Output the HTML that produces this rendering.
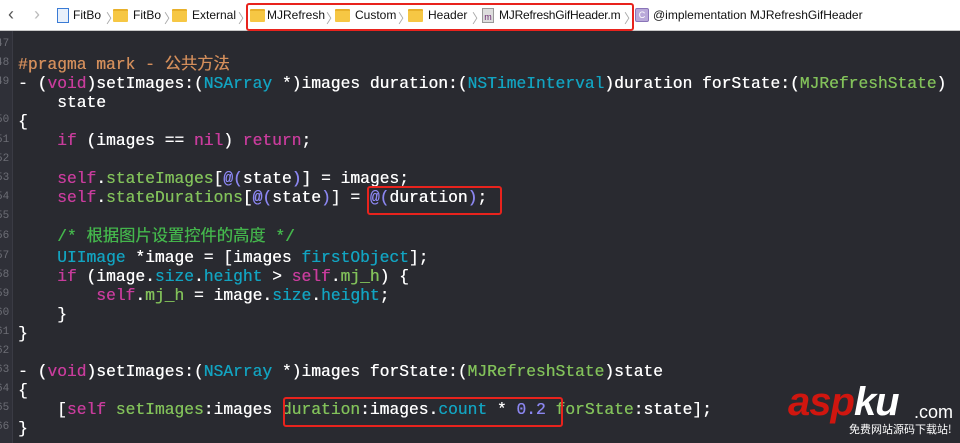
<!DOCTYPE html>
<html><head><meta charset="utf-8"><style>
body{margin:0;width:960px;height:443px;overflow:hidden;background:#292a30;position:relative;font-family:"Liberation Sans","Noto Sans CJK SC",sans-serif}
.top{position:absolute;left:0;top:0;width:960px;height:30px;background:#fff;border-bottom:1px solid #c8c8c8;font-size:12px;color:#111}
.top span{position:absolute;top:8px;white-space:nowrap}
.fold{position:absolute;top:9px;width:15px;height:11px;background:#f6c744;border-top:2px solid #e8b02a;border-radius:1px}
.sep{color:#aaa;font-size:13px}
.gut{position:absolute;left:0;top:31px;width:12px;height:412px;background:#2f3038;border-right:1px solid #3a3b44}
.ln{position:absolute;left:-4px;font:11px "Liberation Mono",monospace;color:#6c6d75}
.c{position:absolute;left:18px;white-space:pre;font:16.3px "Liberation Mono","Noto Sans CJK SC",monospace;color:#fff;line-height:19px;text-shadow:0.3px 0 0 currentColor}
.k{color:#c83c9c}.t{color:#12a3c0}.g{color:#82c15a}.n{color:#8b86f0}.p{color:#d38e5b}.m{color:#44b64c}
.box{position:absolute;border:2px solid #e8231d;border-radius:3px}
</style></head><body>
<div class="top">
<span style="left:8px;top:4px;font-size:18px;color:#555">‹</span>
<span style="left:34px;top:4px;font-size:18px;color:#bbb">›</span>
<div style="position:absolute;left:57px;top:8px;width:10px;height:13px;border:1px solid #3a7bd5;background:#e8f0fb"></div>
<span style="left:73px">FitBo</span><span class="sep" style="left:106px">〉</span>
<div class="fold" style="left:113px"></div><span style="left:133px">FitBo</span><span class="sep" style="left:164px">〉</span>
<div class="fold" style="left:172px"></div><span style="left:192px">External</span><span class="sep" style="left:238px">〉</span>
<div class="fold" style="left:250px"></div><span style="left:267px">MJRefresh</span><span class="sep" style="left:326px">〉</span>
<div class="fold" style="left:335px"></div><span style="left:355px">Custom</span><span class="sep" style="left:398px">〉</span>
<div class="fold" style="left:408px"></div><span style="left:428px">Header</span><span class="sep" style="left:472px">〉</span>
<div style="position:absolute;left:482px;top:8px;width:10px;height:13px;background:#ddd;border:1px solid #999;font-size:9px;color:#6a2a70;text-align:center;line-height:16px">m</div>
<span style="left:499px;letter-spacing:-0.2px">MJRefreshGifHeader.m</span><span class="sep" style="left:624px">〉</span>
<div style="position:absolute;left:635px;top:8px;width:12px;height:12px;background:#b9a9d9;border:1px solid #8a74b8;border-radius:2px;font-size:9px;color:#fff;text-align:center;line-height:12px">C</div>
<span style="left:653px">@implementation MJRefreshGifHeader</span>
<div class="box" style="left:246px;top:3px;width:384px;height:24px"></div>
</div>
<div class="gut">
<div class="ln" style="top:7px">47</div><div class="ln" style="top:26px">48</div><div class="ln" style="top:45px">49</div>
<div class="ln" style="top:83px">50</div><div class="ln" style="top:103px">51</div><div class="ln" style="top:122px">52</div>
<div class="ln" style="top:141px">53</div><div class="ln" style="top:160px">54</div><div class="ln" style="top:179px">55</div>
<div class="ln" style="top:199px">56</div><div class="ln" style="top:219px">57</div><div class="ln" style="top:238px">58</div>
<div class="ln" style="top:257px">59</div><div class="ln" style="top:276px">60</div><div class="ln" style="top:295px">61</div>
<div class="ln" style="top:314px">62</div><div class="ln" style="top:333px">63</div><div class="ln" style="top:352px">64</div>
<div class="ln" style="top:371px">65</div><div class="ln" style="top:390px">66</div>
</div>
<div class="c" style="top:55px"><span class="p">#pragma mark - 公共方法</span></div>
<div class="c" style="top:74px">- (<span class="k">void</span>)setImages:(<span class="t">NSArray</span> *)images duration:(<span class="t">NSTimeInterval</span>)duration forState:(<span class="g">MJRefreshState</span>)</div>
<div class="c" style="top:93px">    state</div>
<div class="c" style="top:112px">{</div>
<div class="c" style="top:131px">    <span class="k">if</span> (images == <span class="k">nil</span>) <span class="k">return</span>;</div>
<div class="c" style="top:169px">    <span class="k">self</span>.<span class="g">stateImages</span>[<span class="n">@(</span>state<span class="n">)</span>] = images;</div>
<div class="c" style="top:188px">    <span class="k">self</span>.<span class="g">stateDurations</span>[<span class="n">@(</span>state<span class="n">)</span>] = <span class="n">@(</span>duration<span class="n">)</span>;</div>
<div class="c" style="top:227px">    <span class="m">/* 根据图片设置控件的高度 */</span></div>
<div class="c" style="top:248px">    <span class="t">UIImage</span> *image = [images <span class="t">firstObject</span>];</div>
<div class="c" style="top:267px">    <span class="k">if</span> (image.<span class="t">size</span>.<span class="t">height</span> &gt; <span class="k">self</span>.<span class="g">mj_h</span>) {</div>
<div class="c" style="top:286px">        <span class="k">self</span>.<span class="g">mj_h</span> = image.<span class="t">size</span>.<span class="t">height</span>;</div>
<div class="c" style="top:305px">    }</div>
<div class="c" style="top:324px">}</div>
<div class="c" style="top:362px">- (<span class="k">void</span>)setImages:(<span class="t">NSArray</span> *)images forState:(<span class="g">MJRefreshState</span>)state</div>
<div class="c" style="top:381px">{</div>
<div class="c" style="top:400px">    [<span class="k">self</span> <span class="g">setImages</span>:images <span class="g">duration</span>:images.<span class="t">count</span> * <span class="n">0.2</span> <span class="g">forState</span>:state];</div>
<div class="c" style="top:419px">}</div>
<div class="box" style="left:367px;top:186px;width:131px;height:25px"></div>
<div class="box" style="left:283px;top:397px;width:276px;height:26px"></div>
<div style="position:absolute;left:788px;top:382px;white-space:nowrap;font:italic bold 40px 'Liberation Sans',sans-serif;color:#d0160f;letter-spacing:-1px;line-height:40px">asp<span style="color:#fff">ku</span></div>
<div style="position:absolute;left:914px;top:402px;font:18px 'Liberation Sans',sans-serif;color:#fff;white-space:nowrap">.com</div>
<div style="position:absolute;left:849px;top:422px;font:11px 'Noto Sans CJK SC',sans-serif;color:#fff;white-space:nowrap;line-height:14px">免费网站源码下载站!</div>
</body></html>
